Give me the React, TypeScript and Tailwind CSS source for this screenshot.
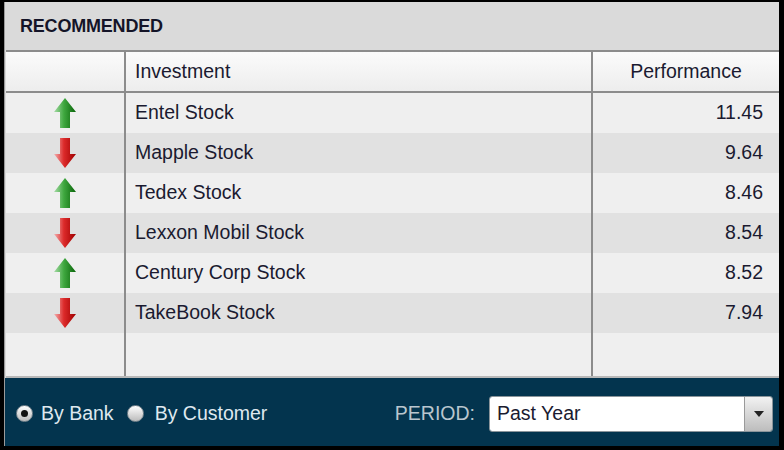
const rows = [
  { name: 'Entel Stock', value: '11.45', up: true },
  { name: 'Mapple Stock', value: '9.64', up: false },
  { name: 'Tedex Stock', value: '8.46', up: true },
  { name: 'Lexxon Mobil Stock', value: '8.54', up: false },
  { name: 'Century Corp Stock', value: '8.52', up: true },
  { name: 'TakeBook Stock', value: '7.94', up: false },
]

function UpArrow() {
  return (
    <svg width="24" height="32" viewBox="0 0 24 32">
      <defs>
        <linearGradient id="gUp" x1="0" y1="0" x2="1" y2="0">
          <stop offset="0" stopColor="#a8dca8" />
          <stop offset="0.45" stopColor="#3fa83f" />
          <stop offset="1" stopColor="#0a650a" />
        </linearGradient>
      </defs>
      <path d="M12 1 L23 15 L17 15 L17 31 L7 31 L7 15 L1 15 Z" fill="url(#gUp)" />
    </svg>
  )
}

function DownArrow() {
  return (
    <svg width="24" height="32" viewBox="0 0 24 32">
      <defs>
        <linearGradient id="gDown" x1="0" y1="0" x2="1" y2="0">
          <stop offset="0" stopColor="#f3b0b0" />
          <stop offset="0.45" stopColor="#dc2a2a" />
          <stop offset="1" stopColor="#a00000" />
        </linearGradient>
      </defs>
      <path d="M7 1 L17 1 L17 17 L23 17 L12 31 L1 17 L7 17 Z" fill="url(#gDown)" />
    </svg>
  )
}

function Radio({ checked }: { checked?: boolean }) {
  return (
    <span className="w-[17px] h-[17px] rounded-full bg-gradient-to-b from-[#ffffff] to-[#bcbcbc] border border-[#7d8a92] flex items-center justify-center">
      {checked && <span className="w-[7px] h-[7px] rounded-full bg-[#111]" />}
    </span>
  )
}

export default function App() {
  return (
    <div
      className="w-[784px] h-[450px] bg-black pl-[4px] pr-[5px] pt-[2px] pb-[4px]"
      style={{ fontFamily: '"Liberation Sans", Arial, sans-serif' }}
    >
      <div className="h-full flex flex-col bg-[#dadada] border-l border-[#9a9a9a]">
        {/* Title */}
        <div className="h-[48px] flex items-center pl-[15px] text-[18px] font-bold text-[#141428] tracking-[-0.2px]">
          RECOMMENDED
        </div>

        {/* Table */}
        <div className="ml-[1px] border-t-2 border-[#8c8c8c] text-[19.5px] text-[#1a1a30]">
          <div className="flex h-[41px] bg-gradient-to-b from-[#fbfbfb] to-[#ededed] border-b-2 border-[#8c8c8c]">
            <div className="w-[120px] border-r-2 border-[#8c8c8c]" />
            <div className="w-[467px] border-r-2 border-[#8c8c8c] flex items-center pl-[9px]">Investment</div>
            <div className="flex-1 flex items-center justify-center">Performance</div>
          </div>
          {rows.map((r, i) => (
            <div key={r.name} className={`flex h-[40px] ${i % 2 === 0 ? 'bg-[#efefef]' : 'bg-[#e1e1e1]'}`}>
              <div className="w-[120px] border-r-2 border-[#8c8c8c] flex items-center justify-center">
                {r.up ? <UpArrow /> : <DownArrow />}
              </div>
              <div className="w-[467px] border-r-2 border-[#8c8c8c] flex items-center pl-[9px]">{r.name}</div>
              <div className="flex-1 flex items-center justify-end pr-[16px]">{r.value}</div>
            </div>
          ))}
          <div className="flex h-[45px] bg-[#efefef] border-b-2 border-[#b8b8b8]">
            <div className="w-[120px] border-r-2 border-[#8c8c8c]" />
            <div className="w-[467px] border-r-2 border-[#8c8c8c]" />
            <div className="flex-1" />
          </div>
        </div>

        {/* Footer */}
        <div className="flex-1 bg-[#03344e] flex items-center pl-[11px] pr-[6px] pt-[3px] text-[19.5px]">
          <div className="flex items-center gap-[8px] text-[#dfe8ef]">
            <Radio checked />
            <span>By Bank</span>
          </div>
          <div className="flex items-center gap-[11px] ml-[13px] text-[#dfe8ef]">
            <Radio />
            <span>By Customer</span>
          </div>
          <span className="ml-auto mr-[14px] text-[#b9c6cf]">PERIOD:</span>
          <div className="flex h-[36px] w-[284px] rounded-[3px] overflow-hidden border border-[#8a949a]">
            <div className="flex-1 bg-white flex items-center pl-[7px] text-[#1a1a30]">Past Year</div>
            <div className="w-[28px] bg-gradient-to-b from-[#f2f2f2] to-[#bdbdbd] border-l border-[#9a9a9a] flex items-center justify-center">
              <svg width="10" height="6" viewBox="0 0 10 6">
                <path d="M0 0 L10 0 L5 6 Z" fill="#222" />
              </svg>
            </div>
          </div>
        </div>
      </div>
    </div>
  )
}
